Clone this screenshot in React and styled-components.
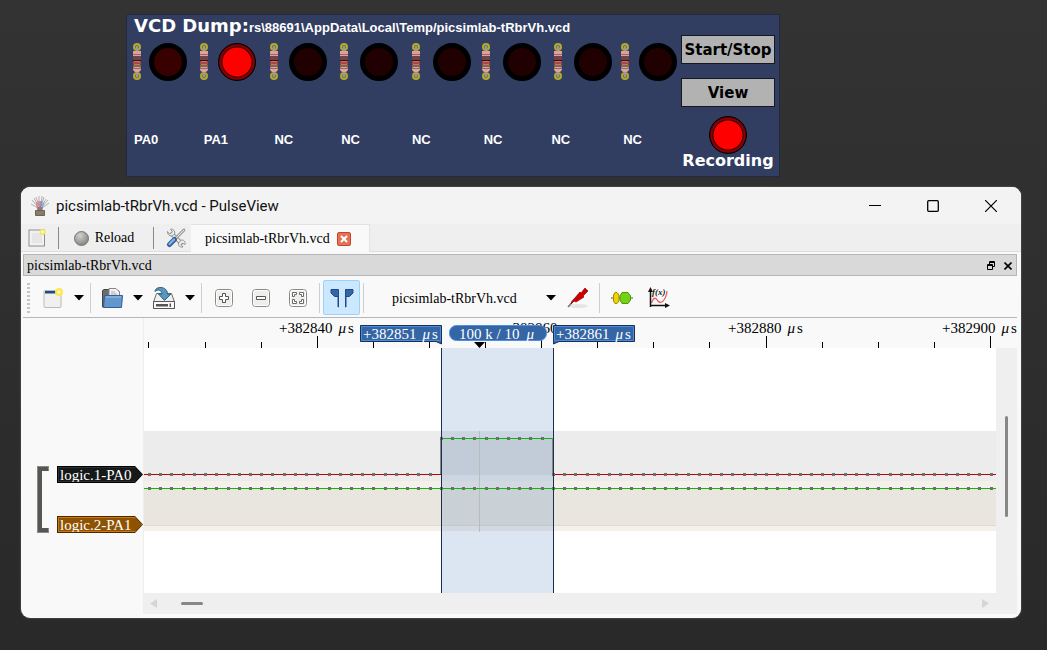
import React from "react";
import styled, { createGlobalStyle } from "styled-components";

const GlobalStyle = createGlobalStyle`
  * { box-sizing: border-box; }
  html, body { margin: 0; }
  body {
    background: linear-gradient(#333333, #292929) fixed;
    min-height: 100vh;
    color: #000;
    font-family: "Liberation Serif", serif;
    font-size: 14px;
  }
  button, select {
    border: 0;
    padding: 0;
    margin: 0;
    background: none;
    color: inherit;
    font: inherit;
  }
`;

const Page = styled.main`
  display: flex;
  flex-direction: column;
  gap: 10px;
  padding: 14px 26px 32px 21px;
`;

/* ---------- Simulator board ---------- */

const Board = styled.section`
  display: flex;
  gap: 3px;
  margin: 0 241px 0 105px;
  padding: 0 3px 0 7px;
  height: 163px;
  background: #323d62;
  border: 1px solid #222a40;
`;

const BoardMain = styled.div`
  flex: 1;
  min-width: 0;
  color: #fff;
`;

const BoardHead = styled.header`
  display: flex;
  align-items: baseline;
  height: 25px;
  white-space: nowrap;
`;

const BoardTitle = styled.h1`
  margin: 0;
  font: bold 18px/22px "DejaVu Sans", sans-serif;
`;

const DumpPath = styled.span`
  font: bold 13px/20px "Liberation Sans", sans-serif;
`;

const LedRow = styled.div`
  display: grid;
  grid-template-columns: 17fr 50fr 19fr 51fr 20fr 50fr 21fr 50fr 22fr 48fr 22fr 50fr 21fr 46fr 19fr 38fr;
  align-items: center;
  height: 43px;
  margin: 0 0 0 -2px;
`;

const Led = styled.span`
  width: 38px;
  height: 38px;
  border-radius: 50%;
  border: 5px solid #000;
  background: ${(p) => (p.$dim ? "#380000" : "#200000")};
  ${(p) =>
    p.$on &&
    `border: 1px solid #000;
     background: radial-gradient(circle, #ff0000 0 14px, #300000 15px, #8a0000 16px 17px, #500000 18px);`}
`;

const PinRow = styled.div`
  display: grid;
  grid-template-columns: 70fr 71fr 67fr 71fr 72fr 68fr 72fr 54fr;
  margin-top: 49px;
  font: bold 13px/16px "Liberation Sans", sans-serif;
`;

const BoardSide = styled.div`
  display: flex;
  flex-direction: column;
  align-items: center;
  width: 96px;
  padding-top: 20px;
  color: #fff;
  font: bold 15px/18px "DejaVu Sans", sans-serif;
`;

const BoardButton = styled.button`
  width: 94px;
  height: 29px;
  margin-bottom: 14px;
  border: 1px solid #16181f;
  background: #b2b2b2;
  color: #000;
`;

const RecordLed = styled(Led)`
  margin-top: -5px;
`;

const RecordLabel = styled.span`
  font-size: 16px;
  line-height: 14px;
`;

const Resistor = () => (
  <svg width="10" height="37" viewBox="0 0 10 37">
    <circle cx="5" cy="4" r="3" fill="#6f6f50" stroke="#b3aa2a" strokeWidth="2" />
    <circle cx="5" cy="33" r="3" fill="#6f6f50" stroke="#b3aa2a" strokeWidth="2" />
    <path d="M5 3V34" stroke="#999" strokeWidth="2" />
    <path d="M1 8H9V14L8 15V24L9 25V27L7 29H3L1 27V25L2 24V15L1 14Z" fill="#e0a0a2" />
    <path d="M1 11.500H9M1 25.500H9" stroke="#98686c" />
    <path d="M1 15H9" stroke="#704444" strokeWidth="4" />
    <path d="M1 17.500H9" stroke="#251515" />
    <path d="M1 20H9" stroke="#b04444" strokeWidth="3" />
    <path d="M1 23H9" stroke="#7a6c3e" strokeWidth="2" />
  </svg>
);

/* ---------- PulseView window ---------- */

const Window = styled.section`
  display: flex;
  flex-direction: column;
  overflow: hidden;
  border-radius: 9px;
  background: #f9f9f9;
  box-shadow: 0 0 2px #777;
`;

const TitleBar = styled.header`
  display: flex;
  align-items: center;
  height: 37px;
  padding: 0 1px 0 9px;
  background: #f3f3f3;
`;

const WindowTitle = styled.h2`
  flex: 1;
  margin: 0 0 0 6px;
  color: #111;
  font: 15px/20px Roboto, sans-serif;
`;

const WindowControl = styled.button`
  display: grid;
  place-items: center;
  width: 58px;
  height: 36px;
`;

const TabBar = styled.nav`
  display: flex;
  align-items: center;
  height: 28px;
  padding-left: 1px;
  background: #efefef;
  border-bottom: 1px solid #dedede;
`;

const TabTool = styled.button`
  display: flex;
  align-items: center;
  justify-content: center;
  gap: 6px;
  width: ${(p) => p.$width || 30}px;
  height: 27px;
`;

const ReloadButton = styled(TabTool)`
  padding: 1px 5px 0 0;
`;

const TabRule = styled.span`
  width: 1px;
  height: 22px;
  margin: 0 7px 0 6px;
  background: #8a8a8a;
`;

const Tab = styled.div`
  display: flex;
  align-items: center;
  align-self: flex-start;
  gap: 7px;
  height: 28px;
  padding: 0 18px 0 14px;
  background: #f9f9f9;
  border: solid #e2e2e2;
  border-width: 1px 1px 0 0;
`;

const TabClose = styled.button`
  display: grid;
  place-items: center;
  width: 14px;
  height: 14px;
  border: 1px solid #c9432c;
  border-radius: 2px;
  background: #e2735a;
`;

const Dock = styled.div`
  padding: 2px 4px 4px 2px;
`;

const DockTitle = styled.div`
  display: flex;
  align-items: center;
  height: 22px;
  padding: 1px 0 0 3px;
  border: 1px solid #b6b6b6;
  background: #d9d9d9;
`;

const DockName = styled.span`
  flex: 1;
`;

const DockButton = styled.button`
  display: grid;
  place-items: center;
  width: 17px;
  height: 18px;
`;

const Toolbar = styled.div`
  display: flex;
  align-items: center;
  height: 42px;
  padding-top: 2px;
  border-bottom: 1px solid #b6b6b6;
`;

const Grip = styled.span`
  width: 3px;
  height: 30px;
  margin: 0 5px 0 4px;
  background: repeating-linear-gradient(#c4c4c4 0 2px, transparent 2px 4px);
`;

const ToolButton = styled.button`
  display: grid;
  place-items: center;
  width: ${(p) => (p.$menu ? 36 : 37)}px;
  height: 35px;
  border-radius: 2px;
  ${(p) => p.$active && "background: #cce8ff; border: 1px solid #99d1ff;"}
`;

const MenuButton = styled.button`
  display: grid;
  place-items: center;
  width: 16px;
  height: 35px;
`;

const ToolRule = styled.span`
  width: 1px;
  height: 30px;
  margin: 0 3px;
  background: #cfcfcf;
`;

const DeviceField = styled.label`
  display: grid;
  align-items: center;
  width: 193px;
  & > * { grid-area: 1 / 1; }
  & > svg { justify-self: end; margin-right: 4px; pointer-events: none; }
`;

const DeviceSelect = styled.select`
  appearance: none;
  width: 100%;
  height: 32px;
  padding: 2px 0 0 25px;
`;

const View = styled.div`
  display: flex;
`;

const SignalPane = styled.aside`
  display: flex;
  gap: 8px;
  width: 121px;
  padding: 148px 0 0 14px;
  border-right: 1px solid #eeeeee;
`;

const Bracket = styled.span`
  width: 12px;
  height: 67px;
  border: 1px solid #888;
  background: #555753;
  clip-path: polygon(0 0, 100% 0, 100% 5px, 5px 5px, 5px 62px, 100% 62px, 100% 100%, 0 100%);
`;

const SignalList = styled.div`
  display: flex;
  flex-direction: column;
  gap: 33px;
`;

const SignalTag = styled.button`
  width: 86px;
  height: 17px;
  padding: 1px;
  background: ${(p) => p.$edge};
  font-size: 15px;
  clip-path: polygon(0 0, 78px 0, 100% 50%, 78px 100%, 0 100%);
`;

const SignalName = styled.span`
  display: block;
  height: 15px;
  padding-left: 1px;
  border: 1px solid ${(p) => p.$rim};
  background: ${(p) => p.$fill};
  color: #fff;
  line-height: 14px;
  text-align: left;
  clip-path: polygon(0 0, 77px 0, 100% 50%, 77px 100%, 0 100%);
`;

const PlotColumn = styled.div`
  flex: 1;
  min-width: 0;
`;

const RulerSvg = styled.svg`
  display: block;
  width: 100%;
  height: 30px;
  font-family: "Liberation Serif", serif;
  font-size: 15px;
`;

const PlotRow = styled.div`
  display: flex;
`;

const TraceSvg = styled.svg`
  display: block;
  flex: 1;
  min-width: 0;
  height: 245px;
  background: #fff;
`;

const VerticalTrack = styled.div`
  width: 21px;
  padding: 68px 0 0 9px;
  background: #efefef;
`;

const HorizontalTrack = styled.div`
  display: flex;
  align-items: center;
  height: 21px;
  padding: 0 28px 0 6px;
  background: #efefef;
`;

const Thumb = styled.div`
  width: ${(p) => (p.$vertical ? 3 : 22)}px;
  height: ${(p) => (p.$vertical ? 101 : 3)}px;
  margin: ${(p) => (p.$vertical ? "0" : "0 auto 0 23px")};
  border-radius: 2px;
  background: #868686;
`;

/* ---------- Icons ---------- */

const Caret = () => (
  <svg width="10" height="6" viewBox="0 0 10 6"><path d="M0 0H10L5 5.500Z" /></svg>
);

const AppIcon = () => (
  <svg width="20" height="22" viewBox="0 0 20 22" fill="none">
    <path d="M8 12L2 5M8 11L4 3M9 11L6 2M9 11L9 1M11 11L12 1M11 11L14 2M12 11L16 4M12 12L18 5M8 13L1 9M12 13L19 8" stroke="#9f9f9f" strokeWidth=".800" />
    <path d="M8 15L6.500 7" stroke="#d98a6a" strokeWidth="1.500" />
    <path d="M9.300 15L9 6" stroke="#e07a9a" strokeWidth="1.500" />
    <path d="M10.700 15L11 6" stroke="#8f7ae0" strokeWidth="1.500" />
    <path d="M12 14L13.500 7" stroke="#79b8b0" strokeWidth="1.500" />
    <path d="M7.500 12H12.500V17H7.500Z" fill="#8f7a80" />
    <path d="M5.500 15.500H14.500V20.500H5.500Z" fill="#857d6d" stroke="#6b6455" />
  </svg>
);

const NewPageIcon = () => (
  <svg width="18" height="18" viewBox="0 0 18 18">
    <rect x="1" y="1" width="15.500" height="16" fill="#f1f1f1" stroke="#8f8f8f" />
    <path d="M4 4V14H14V4Z" fill="#e6e6e6" />
    <circle cx="14.500" cy="3" r="3" fill="#f2e85a" />
    <circle cx="14.500" cy="3" r="1.300" fill="#fffde0" />
  </svg>
);

const BallIcon = () => (
  <svg width="15" height="15" viewBox="0 0 15 15">
    <defs>
      <radialGradient id="ball" cx="0.400" cy="0.300" r="0.700">
        <stop offset="0" stopColor="#d2d2ce" />
        <stop offset="1" stopColor="#85857f" />
      </radialGradient>
    </defs>
    <circle cx="7.500" cy="7.500" r="7" fill="url(#ball)" stroke="#777772" />
  </svg>
);

const ToolsIcon = () => (
  <svg width="20" height="20" viewBox="0 0 20 20" fill="none" strokeLinecap="round">
    <path d="M6 6L15 15" stroke="#8a8a88" strokeWidth="4" />
    <path d="M6 6L15 15" stroke="#eeeeec" strokeWidth="2.400" />
    <path d="M1.500 4L4 6L6.500 4L4.500 1.200C7 .500 9.500 3 8.500 6C6 9.500 1.500 8 1.500 4Z" fill="#eeeeec" stroke="#8a8a88" strokeWidth=".900" />
    <path d="M12.500 15L15.500 12C19 12 19.500 15 19 16.500L16.500 15L15 16.500L17 19C14 19.500 12 18 12.500 15Z" fill="#eeeeec" stroke="#8a8a88" strokeWidth=".900" />
    <path d="M18 2L10 10" stroke="#777" strokeWidth="2.600" />
    <path d="M18 2L10 10" stroke="#e2e2e0" strokeWidth="1.200" />
    <path d="M8.500 11.500L3.500 16.500" stroke="#3465a4" strokeWidth="5" />
    <path d="M8 11.500L3.500 16" stroke="#8fb4de" strokeWidth="2" />
  </svg>
);

const WindowIcon = () => (
  <svg width="20" height="20" viewBox="0 0 20 20">
    <rect x="1" y="2.500" width="17" height="17" rx="1" fill="#f0f0ee" stroke="#babab6" />
    <path d="M2 3H15V5.500H2Z" fill="#204a87" />
    <circle cx="16" cy="4" r="4" fill="#fce94f" />
    <circle cx="16" cy="4" r="1.600" fill="#fffde5" />
  </svg>
);

const FolderIcon = () => (
  <svg width="22" height="22" viewBox="0 0 22 22">
    <path d="M1.500 20V3.500L3 2.500H8L9 4H18V20Z" fill="#6c6c6a" stroke="#454545" />
    <path d="M8 14V1.500H15L18.500 5V14Z" fill="#f3f3f3" stroke="#868686" />
    <path d="M10 5H14M10 7H16" stroke="#aaa" />
    <path d="M3.500 8.500H21.500L20.500 20.500H2.500Z" fill="#6396cd" stroke="#305f9a" />
    <path d="M5 10H20" stroke="#a3c4e8" />
  </svg>
);

const SaveIcon = () => (
  <svg width="24" height="24" viewBox="0 0 24 24">
    <path d="M4.500 7.500H19.500L22.500 16V22.500H1.500V16Z" fill="#f0f0ee" stroke="#6b6b6b" />
    <path d="M1.500 15.500H22.500V22.500H1.500Z" fill="#fafafa" stroke="#555" />
    <path d="M4 18H16V20.500H4ZM17.500 17.500H19V21H17.500Z" fill="#555" />
    <path d="M3 5.500C3.500 -.500 15.500 0 15.500 8H19L12.500 14.500L6.500 8H10C9.500 3.500 5.500 3 3 5.500Z" fill="#5a96bd" stroke="#2a6287" />
  </svg>
);

const ZoomFrame = ({ children }) => (
  <svg width="18" height="18" viewBox="0 0 18 18" fill="none">
    <rect x=".500" y=".500" width="17" height="17" rx="3" fill="#eeeeec" stroke="#888a85" />
    <rect x="1.500" y="1.500" width="15" height="15" rx="2" stroke="#fff" />
    {children}
  </svg>
);

const ZoomInIcon = () => (
  <ZoomFrame><path d="M7.500 4.500H10.500V7.500H13.500V10.500H10.500V13.500H7.500V10.500H4.500V7.500H7.500Z" fill="#fff" stroke="#555753" /></ZoomFrame>
);

const ZoomOutIcon = () => (
  <ZoomFrame><path d="M4.500 7.500H13.500V10.500H4.500Z" fill="#fff" stroke="#555753" /></ZoomFrame>
);

const ZoomFitIcon = () => (
  <ZoomFrame>
    <path d="M3.500 3.500H7.500V5.500H5.500V7.500H3.500ZM10.500 3.500H14.500V7.500H12.500V5.500H10.500ZM3.500 10.500H5.500V12.500H7.500V14.500H3.500ZM12.500 10.500H14.500V14.500H10.500V12.500H12.500Z" fill="#fff" stroke="#6b6d69" />
  </ZoomFrame>
);

const CursorsIcon = () => (
  <svg width="24" height="20" viewBox="0 0 24 20">
    <path d="M1 1.500H8.500V19H8V8.500H4.500L1 5ZM23 1.500H15.500V19H16V8.500H19.500L23 5Z" fill="#3465a4" stroke="#204a87" />
  </svg>
);

const ProbeIcon = () => (
  <svg width="22" height="22" viewBox="0 0 22 22">
    <ellipse cx="11" cy="19" rx="10" ry="2" fill="#e5e5e5" />
    <path d="M1 20L9 11" stroke="#777" strokeWidth="1.500" />
    <path d="M7 12L13 5L14 6L18 1L21 4L16 9L17 10L9 15L7 14L4 17L5 14Z" fill="#cc0000" stroke="#900" strokeWidth=".700" />
  </svg>
);

const DecoderIcon = () => (
  <svg width="22" height="14" viewBox="0 0 22 14">
    <path d="M0 7H22" stroke="#555" />
    <path d="M4 1.500H6L8 4V10L6 12.500H4L2.500 10V4Z" fill="#edd400" stroke="#a88600" />
    <path d="M11 1.500H17L19.500 5V9L17 12.500H11L9 9V5Z" fill="#73d216" stroke="#4e9a06" />
  </svg>
);

const MathIcon = () => (
  <svg width="22" height="22" viewBox="0 0 22 22" fill="none">
    <path d="M3.500 16C6 9 8 11 10 14C13 18 18 13 19 4" stroke="#ef5a5a" strokeWidth="1.300" />
    <path d="M2.500 20V3M2 18.500H18" stroke="#111" strokeWidth="1.500" />
    <path d="M0 5L2.500 0L5 5ZM17 16L22 18.500L17 21Z" fill="#111" />
    <text x="4" y="8" fontFamily="Liberation Serif, serif" fontStyle="italic" fontWeight="bold" fontSize="9" fill="#222">f(x)</text>
  </svg>
);

/* ---------- Plot ---------- */

const TICK_STEP = 56.1;
const ticks = Array.from({ length: 16 }, (_, i) => ({
  x: Math.round(4.400 + i * TICK_STEP),
  major: i % 4 === 3,
}));
const samples = Array.from({ length: 76 }, (_, i) => Math.round(5 + i * TICK_STEP / 5));

const Time = ({ x, y, value, fill = "#000" }) => (
  <text x={x} y={y} fill={fill}>
    {value}
    <tspan dx="6" fontStyle="italic">μ</tspan>
    <tspan dx="2">s</tspan>
  </text>
);

const Ruler = () => (
  <RulerSvg>
    {ticks.map((t) => (
      <rect key={t.x} x={t.x} y={t.major ? 18 : 24} width="1" height={t.major ? 12 : 6} />
    ))}
    <Time x={135} y={15} value="+382840" />
    <Time x={360} y={15} value="+382860" />
    <Time x={584} y={15} value="+382880" />
    <Time x={798} y={15} value="+382900" />
    <path d="M216.500 7.500H297.500V26L292 23.500H216.500Z" fill="#3465a4" stroke="#1a3250" />
    <path d="M217.500 8.500H296.500V22.500H217.500Z" fill="none" stroke="#4a8ae0" />
    <Time x={219} y={21} value="+382851" fill="#fff" />
    <rect x="305.500" y="7.500" width="97" height="15" rx="7" fill="#3465a4" stroke="#4c8ee8" />
    <text x="315" y="21" fill="#fff">100 k / 10<tspan dx="7" fontStyle="italic">μ</tspan></text>
    <path d="M409.500 7.500H490.500V23.500H415L409.500 26Z" fill="#3465a4" stroke="#1a3250" />
    <path d="M410.500 8.500H489.500V22.500H410.500Z" fill="none" stroke="#4a8ae0" />
    <Time x={412} y={21} value="+382861" fill="#fff" />
    <path d="M330 24H341L335.500 30Z" />
  </RulerSvg>
);

const Traces = () => (
  <TraceSvg shapeRendering="crispEdges">
    <rect y="83" width="100%" height="50" fill="#ececec" />
    <rect y="133" width="100%" height="50" fill="#f5f0ea" />
    <rect y="140" width="100%" height="38" fill="#e9e6df" />
    <rect y="177" width="100%" height="1" fill="#dfdbd4" />
    <rect x="297" y="90" width="112" height="37" fill="#e0e0e0" />
    <rect x="297" width="113" height="245" fill="#316cb2" fillOpacity=".17" />
    <rect x="335" y="83" width="1" height="101" fill="#b9bcbf" />
    <rect y="126" width="297" height="1" fill="#c00000" />
    <rect x="409" y="126" width="100%" height="1" fill="#c00000" />
    <rect x="297" y="90" width="112" height="1" fill="#00c000" />
    <rect y="140" width="100%" height="1" fill="#00c000" />
    <path d="M296.500 90V126M408.500 90V126" stroke="#888" />
    {samples.map((x) => (
      <React.Fragment key={x}>
        <rect x={x - 1} y={x > 290 && x < 405 ? 89 : 125} width="3" height="3" fill="#6f6f6f" />
        <rect x={x - 1} y="139" width="3" height="3" fill="#6f6f6f" />
      </React.Fragment>
    ))}
    <rect x="297" width="1" height="245" fill="#1a2f4c" />
    <rect x="409" width="1" height="245" fill="#1a2f4c" />
  </TraceSvg>
);

const channels = [
  { pin: "PA0", dim: true },
  { pin: "PA1", on: true },
  { pin: "NC" },
  { pin: "NC" },
  { pin: "NC" },
  { pin: "NC" },
  { pin: "NC" },
  { pin: "NC" },
];

const FILE = "picsimlab-tRbrVh.vcd";

export default function App() {
  return (
    <Page>
      <GlobalStyle />
      <Board>
        <BoardMain>
          <BoardHead>
            <BoardTitle>VCD Dump:</BoardTitle>
            <DumpPath>{"rs\\88691\\AppData\\Local\\Temp/" + FILE}</DumpPath>
          </BoardHead>
          <LedRow>
            {channels.map((c, i) => (
              <React.Fragment key={i}>
                <Resistor />
                <Led $on={c.on} $dim={c.dim} />
              </React.Fragment>
            ))}
          </LedRow>
          <PinRow>
            {channels.map((c, i) => <span key={i}>{c.pin}</span>)}
          </PinRow>
        </BoardMain>
        <BoardSide>
          <BoardButton>Start/Stop</BoardButton>
          <BoardButton>View</BoardButton>
          <RecordLed $on />
          <RecordLabel>Recording</RecordLabel>
        </BoardSide>
      </Board>

      <Window>
        <TitleBar>
          <AppIcon />
          <WindowTitle>{FILE} - PulseView</WindowTitle>
          <WindowControl aria-label="Minimize">
            <svg width="12" height="12" viewBox="0 0 12 12"><path d="M0 5.500H12" stroke="#000" /></svg>
          </WindowControl>
          <WindowControl aria-label="Maximize">
            <svg width="12" height="12" viewBox="0 0 12 12"><rect x=".700" y=".700" width="10.600" height="10.600" rx="1" fill="none" stroke="#000" strokeWidth="1.300" /></svg>
          </WindowControl>
          <WindowControl aria-label="Close">
            <svg width="12" height="12" viewBox="0 0 12 12"><path d="M0 0L12 12M12 0L0 12" stroke="#000" strokeWidth="1.200" /></svg>
          </WindowControl>
        </TitleBar>

        <TabBar>
          <TabTool aria-label="New session"><NewPageIcon /></TabTool>
          <TabRule />
          <ReloadButton $width={81}><BallIcon />Reload</ReloadButton>
          <TabRule />
          <TabTool aria-label="Settings"><ToolsIcon /></TabTool>
          <Tab>
            {FILE}
            <TabClose aria-label="Close tab">
              <svg width="8" height="8" viewBox="0 0 8 8"><path d="M1 1L7 7M7 1L1 7" stroke="#fff" strokeWidth="2" /></svg>
            </TabClose>
          </Tab>
        </TabBar>

        <Dock>
          <DockTitle>
            <DockName>{FILE}</DockName>
            <DockButton aria-label="Float">
              <svg width="8" height="9" viewBox="0 0 8 9" fill="none" stroke="#000">
                <path d="M2.500 3V.500H7.500V5.500H6M2 1.500H8M.500 3.500H5.500V8.500H.500ZM0 4.500H6" />
              </svg>
            </DockButton>
            <DockButton aria-label="Close view">
              <svg width="8" height="8" viewBox="0 0 8 8"><path d="M.500 .500L7.500 7.500M7.500 .500L.500 7.500" stroke="#000" strokeWidth="1.600" /></svg>
            </DockButton>
          </DockTitle>

          <Toolbar>
            <Grip />
            <ToolButton $menu aria-label="New view"><WindowIcon /></ToolButton>
            <MenuButton aria-label="New view menu"><Caret /></MenuButton>
            <ToolRule />
            <ToolButton $menu aria-label="Open"><FolderIcon /></ToolButton>
            <MenuButton aria-label="Open menu"><Caret /></MenuButton>
            <ToolButton $menu aria-label="Save"><SaveIcon /></ToolButton>
            <MenuButton aria-label="Save menu"><Caret /></MenuButton>
            <ToolRule />
            <ToolButton aria-label="Zoom in"><ZoomInIcon /></ToolButton>
            <ToolButton aria-label="Zoom out"><ZoomOutIcon /></ToolButton>
            <ToolButton aria-label="Zoom to fit"><ZoomFitIcon /></ToolButton>
            <ToolRule />
            <ToolButton $active aria-label="Show cursors"><CursorsIcon /></ToolButton>
            <ToolRule />
            <DeviceField>
              <DeviceSelect aria-label="Device"><option>{FILE}</option></DeviceSelect>
              <Caret />
            </DeviceField>
            <ToolButton $menu aria-label="Configure channels"><ProbeIcon /></ToolButton>
            <ToolRule />
            <ToolButton aria-label="Add decoder"><DecoderIcon /></ToolButton>
            <ToolButton aria-label="Add math signal"><MathIcon /></ToolButton>
          </Toolbar>

          <View>
            <SignalPane>
              <Bracket />
              <SignalList>
                <SignalTag $edge="#000"><SignalName $fill="#16191a" $rim="#2b3133">logic.1-PA0</SignalName></SignalTag>
                <SignalTag $edge="#472800"><SignalName $fill="#8f5202" $rim="#c97a12">logic.2-PA1</SignalName></SignalTag>
              </SignalList>
            </SignalPane>
            <PlotColumn>
              <Ruler />
              <PlotRow>
                <Traces />
                <VerticalTrack><Thumb $vertical /></VerticalTrack>
              </PlotRow>
              <HorizontalTrack>
                <svg width="8" height="9" viewBox="0 0 8 9"><path d="M0 4.500L7 0V9Z" fill="#d5d5d5" /></svg>
                <Thumb />
                <svg width="8" height="9" viewBox="0 0 8 9"><path d="M8 4.500L1 0V9Z" fill="#d5d5d5" /></svg>
              </HorizontalTrack>
            </PlotColumn>
          </View>
        </Dock>
      </Window>
    </Page>
  );
}
